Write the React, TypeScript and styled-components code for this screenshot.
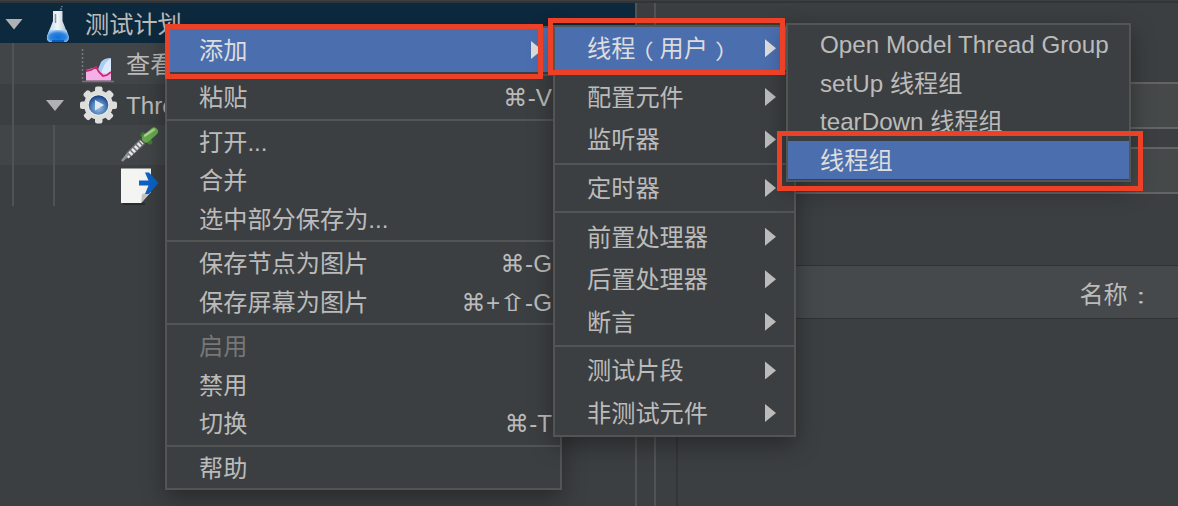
import React from 'react';
import styled, { createGlobalStyle, css } from 'styled-components';

const GlobalStyle = createGlobalStyle`
  body {
    margin: 0;
    overflow: hidden;
    background: #3c3f41;
  }

  * {
    box-sizing: border-box;
  }
`;

const Window = styled.div`
  position: relative;
  display: flex;
  flex-direction: column;
  width: 1178px;
  height: 506px;
  overflow: hidden;
  background: #3c3f41;
  color: #bbbbbb;
  font-family: 'Liberation Sans', 'Noto Sans CJK SC', sans-serif;
  font-size: 24.2px;
  line-height: 30px;
  white-space: nowrap;
`;

const TopEdge = styled.div`
  flex: none;
  height: 3px;
  border-bottom: 2px solid #323436;
`;

const Body = styled.div`
  display: flex;
  flex: 1;
`;

const TreePane = styled.div`
  width: 635px;
  flex: none;
`;

const TreeRow = styled.div<{ $variant: 'selected' | 'odd' | 'even'; $height: number }>`
  display: flex;
  align-items: center;
  height: ${props => props.$height}px;
  background: ${props =>
    props.$variant === 'selected' ? '#0d293e' : props.$variant === 'odd' ? '#414547' : '#3c3f41'};
`;

const Guide = styled.div`
  width: 41px;
  height: 100%;
  flex: none;

  &::before {
    content: '';
    display: block;
    width: 2px;
    height: 100%;
    margin-left: 12px;
    background: #505354;
  }
`;

const ToggleCell = styled.div`
  width: 38px;
  flex: none;
  padding-left: 5px;
`;

const Toggle = styled.div`
  width: 18px;
  height: 11px;
  margin-top: 2px;
  background: #afb1b3;
  clip-path: polygon(0 0, 100% 0, 50% 100%);
`;

const NodeIcon = styled.svg`
  width: 40px;
  height: 40px;
  flex: none;
`;

const NodeLabel = styled.span`
  padding-top: 3px;
  margin-left: 7px;
`;

const Splitter = styled.div`
  width: 21px;
  flex: none;
  border-left: 2px solid #525453;
  border-right: 2px solid #525453;
`;

const EditorPane = styled.div`
  flex: 1;
  display: flex;
  flex-direction: column;
`;

const FieldList = styled.div`
  display: flex;
  flex-direction: column;
  gap: 18px;
  padding: 79px 0 0 100px;
  height: 262px;
`;

const Field = styled.div`
  height: 47px;
  background: #45494a;
  border-top: 2px solid #646464;
  border-bottom: 2px solid #646464;
`;

const Table = styled.div`
  flex: 1;
  margin-left: 20px;
  border-left: 2px solid #333637;
`;

const TableHeader = styled.div`
  display: flex;
  align-items: center;
  justify-content: flex-end;
  height: 54px;
  padding: 6px 26px 0 0;
  background: #45494b;
  border-top: 1px solid #2f3233;
  border-bottom: 1px solid #2f3233;
`;

const Colon = styled.span`
  font-family: 'Noto Sans CJK TC', sans-serif;
  transform: translate(1px, 2px) scaleY(0.7);
`;

const Menu = styled.div<{ $x: number; $y: number; $width: number }>`
  position: absolute;
  left: ${props => props.$x}px;
  top: ${props => props.$y}px;
  width: ${props => props.$width}px;
  padding-bottom: 1px;
  background: #3c3f41;
  border: 2px solid #535554;
  box-shadow: 0 8px 22px rgba(0, 0, 0, 0.35);
`;

const MenuItem = styled.div<{ $height: number; $selected?: boolean; $disabled?: boolean }>`
  display: flex;
  align-items: center;
  justify-content: space-between;
  height: ${props => props.$height}px;
  padding-left: 32px;

  ${props => props.$selected && css`
    background: #4b6eaf;
    color: #dddddd;
  `}

  ${props => props.$disabled && css`
    color: #777777;
  `}
`;

const MenuLabel = styled.span`
  padding-top: 2px;
`;

const Separator = styled.div`
  height: 6px;
  padding: 2px 0;

  &::before {
    content: '';
    display: block;
    height: 2px;
    background: #535554;
  }
`;

const Arrow = styled.div`
  width: 11px;
  height: 18px;
  margin-right: 18px;
  background: currentColor;
  clip-path: polygon(0 0, 100% 50%, 0 100%);
`;

const Shortcut = styled.span`
  display: flex;
  padding-top: 2px;
  margin-right: 8px;
`;

const KeySymbol = styled.span<{ $stretch: number }>`
  width: 25px;
  text-align: center;
  font-family: 'DejaVu Sans', sans-serif;
  font-size: 24px;
  transform: scaleX(${props => props.$stretch});
`;

const Paren = styled.span<{ $shift: number }>`
  display: inline-block;
  transform: translate(${props => props.$shift}px, 3px) scaleY(0.85);
`;

const Highlight = styled.div<{ $x: number; $y: number; $width: number; $height: number }>`
  position: absolute;
  left: ${props => props.$x}px;
  top: ${props => props.$y}px;
  width: ${props => props.$width}px;
  height: ${props => props.$height}px;
  border: 5px solid #ec4126;
`;

const FlaskIcon = () => (
  <NodeIcon viewBox="0 0 40 40">
    <defs>
      <linearGradient id="flask" x1="0" x2="1">
        <stop offset="0" stopColor="#bcd4ea" />
        <stop offset="0.5" stopColor="#f4f6f8" />
        <stop offset="1" stopColor="#9fb4c8" />
      </linearGradient>
      <radialGradient id="liquid" cx="0.5" cy="0.6" r="0.6">
        <stop offset="0" stopColor="#0a6fe0" />
        <stop offset="0.6" stopColor="#2f83dd" />
        <stop offset="1" stopColor="#a5cdf3" />
      </radialGradient>
    </defs>
    <path d="M22 10 L24 3" stroke="#6f7f8b" strokeWidth="1.5" strokeDasharray="2 1" />
    <path d="M15 8 h9.5 v10 l6 15 q1 5 -3 6 h-15.5 q-4 -1 -3 -6 l6 -15 z" fill="url(#flask)" />
    <path d="M11.5 27 h17 l2.5 7 q0 4 -3.5 5 h-15 q-3.5 -1 -3.5 -5 z" fill="url(#liquid)" />
    <path d="M14 38 h12" stroke="#075fc4" strokeWidth="2" />
    <path d="M17.5 11 v9" stroke="#8996a2" strokeWidth="1.5" />
  </NodeIcon>
);

const ChartIcon = () => (
  <NodeIcon viewBox="0 0 40 40">
    <path d="M3.5 5 V37" stroke="#777b7d" strokeWidth="1.5" strokeDasharray="2 2" />
    <path d="M3 37.5 H35" stroke="#717577" strokeWidth="1.5" />
    <path d="M15 31 Q20 25 22 18 Q25 14 32 14 V36 H17 z" fill="#a9cdf5" />
    <path d="M22 29 Q27 15 32 15 V31 z" fill="#dbeafd" />
    <path d="M7 26 L17 23 L20 28 L28 30 L32 27 V36.5 H7 z" fill="#f4b0e6" />
    <path d="M7 27 L12 26 L17 23 L20 28 L24 32 L28 31 L32 28" fill="none" stroke="#c52a70" strokeWidth="1.8" />
  </NodeIcon>
);

const GearIcon = () => (
  <NodeIcon viewBox="0 0 40 40">
    <defs>
      <radialGradient id="hub" cx="0.5" cy="0.65" r="0.6">
        <stop offset="0" stopColor="#9cc1e6" />
        <stop offset="0.6" stopColor="#4f7fb8" />
        <stop offset="1" stopColor="#1d4586" />
      </radialGradient>
    </defs>
    <g fill="#dededc">
      {[0, 45, 90, 135].map(angle => (
        <rect key={angle} x="16" y="1.5" width="7.5" height="37" rx="2" transform={`rotate(${angle} 19.5 20)`} />
      ))}
      <circle cx="19.5" cy="20" r="14.5" />
    </g>
    <circle cx="19.5" cy="20" r="10.5" fill="#f1f1ef" />
    <circle cx="19.5" cy="20" r="9.8" fill="url(#hub)" />
    <path d="M16 15 L25 20 L16 25.5 z" fill="#dfe9f4" />
  </NodeIcon>
);

const DropperIcon = () => (
  <NodeIcon viewBox="0 0 40 40">
    <path d="M2 36 L7 27 L20 14 L25 19 L12 31 z" fill="#6f7272" />
    <path d="M7 32 L22 17" stroke="#e8e8e8" strokeWidth="4.5" strokeDasharray="2.5 1.5" />
    <path d="M2 36 L8 29" stroke="#929595" strokeWidth="2.5" />
    <path d="M23 10 L30 17" stroke="#3f7c32" strokeWidth="5" strokeLinecap="round" />
    <path d="M26 13.5 L34 6.5" stroke="#68a84f" strokeWidth="8" strokeLinecap="round" />
    <path d="M25 10.5 L34 4.5" stroke="#a5d58c" strokeWidth="2.5" strokeLinecap="round" />
  </NodeIcon>
);

const PageIcon = () => (
  <NodeIcon viewBox="0 0 40 40">
    <path d="M3 38 H25" stroke="#2a2c2d" strokeWidth="2" />
    <path d="M1 2.5 H31 V26 L21 37 H1 z" fill="#f4f4f2" />
    <path d="M21 37 L22 28 L31 26 z" fill="#c4c6c6" />
    <path d="M19 14.5 H28.5 L25 6.5 H29 L38.5 17 L29 28 H25 L28.5 19.5 H19 z" fill="#0b63c5" />
  </NodeIcon>
);

type Entry = {
  label?: React.ReactNode;
  height?: number;
  selected?: boolean;
  disabled?: boolean;
  arrow?: boolean;
  keys?: string;
};

const separator: Entry = {};

const contextMenu: Entry[] = [
  { label: '添加', height: 44, selected: true, arrow: true },
  separator,
  { label: '粘贴', keys: '⌘-V' },
  separator,
  { label: '打开...' },
  { label: '合并' },
  { label: '选中部分保存为...' },
  separator,
  { label: '保存节点为图片', keys: '⌘-G' },
  { label: '保存屏幕为图片', keys: '⌘+⇧-G' },
  separator,
  { label: '启用', disabled: true },
  { label: '禁用' },
  { label: '切换', keys: '⌘-T' },
  separator,
  { label: '帮助' },
];

const addMenu: Entry[] = [
  {
    label: (
      <>
        线程<Paren $shift={-6}>（</Paren>用户<Paren $shift={7}>）</Paren>
      </>
    ),
    selected: true,
    arrow: true,
  },
  separator,
  { label: '配置元件', arrow: true },
  { label: '监听器', arrow: true },
  separator,
  { label: '定时器', arrow: true },
  separator,
  { label: '前置处理器', arrow: true },
  { label: '后置处理器', arrow: true },
  { label: '断言', arrow: true },
  separator,
  { label: '测试片段', arrow: true },
  { label: '非测试元件', arrow: true },
];

const threadMenu: Entry[] = [
  { label: 'Open Model Thread Group' },
  { label: 'setUp 线程组' },
  { label: 'tearDown 线程组' },
  { label: '线程组', selected: true },
];

// The shift arrow is much narrower than the command sign in this font
const keyStretch: Record<string, number> = { '⌘': 1, '⇧': 1.45 };

const renderKeys = (keys: string) =>
  [...keys].map((key, i) =>
    keyStretch[key] ? (
      <KeySymbol key={i} $stretch={keyStretch[key]}>{key}</KeySymbol>
    ) : (
      <span key={i}>{key}</span>
    )
  );

const renderEntries = (entries: Entry[], itemHeight: number) =>
  entries.map((entry, i) =>
    entry.label ? (
      <MenuItem
        key={i}
        $height={entry.height ?? itemHeight}
        $selected={entry.selected}
        $disabled={entry.disabled}
      >
        <MenuLabel>{entry.label}</MenuLabel>
        {entry.arrow && <Arrow />}
        {entry.keys && <Shortcut>{renderKeys(entry.keys)}</Shortcut>}
      </MenuItem>
    ) : (
      <Separator key={i} />
    )
  );

const App: React.FC = () => (
  <>
    <GlobalStyle />
    <Window>
      <TopEdge />
      <Body>
        <TreePane>
          <TreeRow $variant="selected" $height={40}>
            <ToggleCell><Toggle /></ToggleCell>
            <FlaskIcon />
            <NodeLabel>测试计划</NodeLabel>
          </TreeRow>
          <TreeRow $variant="odd" $height={41}>
            <Guide />
            <ToggleCell />
            <ChartIcon />
            <NodeLabel>查看</NodeLabel>
          </TreeRow>
          <TreeRow $variant="even" $height={41}>
            <Guide />
            <ToggleCell><Toggle /></ToggleCell>
            <GearIcon />
            <NodeLabel>Thre</NodeLabel>
          </TreeRow>
          <TreeRow $variant="odd" $height={40}>
            <Guide />
            <Guide />
            <ToggleCell />
            <DropperIcon />
          </TreeRow>
          <TreeRow $variant="even" $height={41}>
            <Guide />
            <Guide />
            <ToggleCell />
            <PageIcon />
          </TreeRow>
        </TreePane>
        <Splitter />
        <EditorPane>
          <FieldList>
            <Field />
            <Field />
          </FieldList>
          <Table>
            <TableHeader>
              名称<Colon>：</Colon>
            </TableHeader>
          </Table>
        </EditorPane>
      </Body>

      <Menu $x={165} $y={26} $width={397}>
        {renderEntries(contextMenu, 38.5)}
      </Menu>
      <Menu $x={553} $y={25} $width={243}>
        {renderEntries(addMenu, 42.6)}
      </Menu>
      <Menu $x={786} $y={23} $width={345}>
        {renderEntries(threadMenu, 38.5)}
      </Menu>

      <Highlight $x={165} $y={24} $width={378} $height={55} />
      <Highlight $x={548} $y={18} $width={237} $height={57} />
      <Highlight $x={777} $y={131} $width={366} $height={60} />
    </Window>
  </>
);

export default App;
